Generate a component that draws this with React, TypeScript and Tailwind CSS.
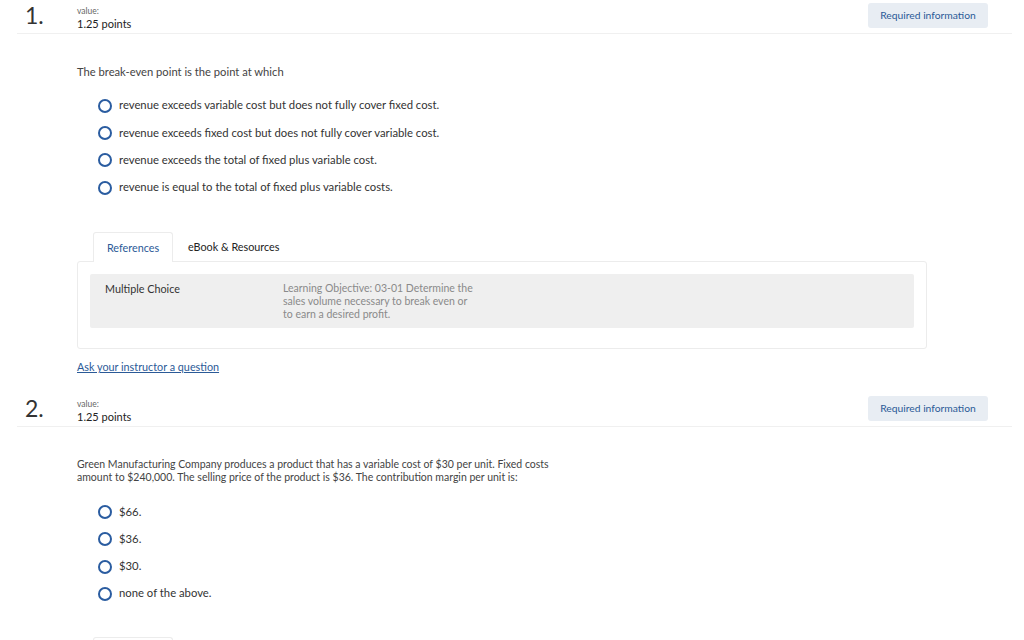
import React from 'react';

type Question = {
  num: number;
  text: string[];
  textSize: string;
  options: string[];
};

const questions: Question[] = [
  {
    num: 1,
    text: ['The break-even point is the point at which'],
    textSize: 'text-[11.2px]',
    options: [
      'revenue exceeds variable cost but does not fully cover fixed cost.',
      'revenue exceeds fixed cost but does not fully cover variable cost.',
      'revenue exceeds the total of fixed plus variable cost.',
      'revenue is equal to the total of fixed plus variable costs.',
    ],
  },
  {
    num: 2,
    text: [
      'Green Manufacturing Company produces a product that has a variable cost of $30 per unit. Fixed costs',
      'amount to $240,000. The selling price of the product is $36. The contribution margin per unit is:',
    ],
    textSize: 'text-[10.5px]',
    options: ['$66.', '$36.', '$30.', 'none of the above.'],
  },
];

const Header: React.FC<{ num: number }> = ({ num }) => (
  <div className="ml-[17px] w-[995px] h-[34px] border-b border-[#f0f0f0] flex relative">
    <div className="w-[60px] pl-[8px] pt-[1px] text-[23px] leading-[28px] text-[#333]">{num}.</div>
    <div className="pt-[6px]">
      <div className="text-[8.5px] leading-[11px] text-[#666]">value:</div>
      <div className="text-[11px] leading-[14px] text-[#222]">1.25 points</div>
    </div>
    <button className="absolute right-[24px] top-[3px] w-[120px] h-[25px] rounded-[3px] bg-[#e8edf3] text-[10.3px] text-[#2b5a97]">
      Required information
    </button>
  </div>
);

const Radio: React.FC = () => (
  <span className="w-[14px] h-[14px] rounded-full border-2 border-[#2a5ca0] inline-block shrink-0" />
);

const QuestionBlock: React.FC<{ q: Question }> = ({ q }) => (
  <div>
    <Header num={q.num} />
    <div className={`ml-[77px] mt-[31px] ${q.textSize} leading-[13px] text-[#444]`}>
      {q.text.map((line, i) => (
        <div key={i}>{line}</div>
      ))}
    </div>
    <div className="ml-[98px] mt-[14px]">
      {q.options.map((opt, i) => (
        <div key={i} className="h-[27.33px] flex items-center gap-[7px]">
          <Radio />
          <span className="text-[11.3px] text-[#333]">{opt}</span>
        </div>
      ))}
    </div>
  </div>
);

export default function App() {
  return (
    <div className="w-[1024px] h-[640px] overflow-hidden bg-white" style={{ fontFamily: 'Lato, "Noto Sans", sans-serif' }}>
      <QuestionBlock q={questions[0]} />

      <div className="ml-[77px] mt-[31px] w-[850px]">
        <div className="flex items-end h-[29px] pl-[16px]">
          <div className="h-[30px] w-[80px] border border-b-0 border-[#ececec] rounded-t-[3px] bg-white relative top-[1px] flex items-center justify-center text-[10.8px] text-[#2b5a97]">
            References
          </div>
          <div className="h-[29px] px-[15px] flex items-center text-[10.8px] text-[#222]">eBook &amp; Resources</div>
        </div>
        <div className="border border-[#ececec] rounded-[3px] h-[88px] px-[12px] pt-[12px]">
          <div className="bg-[#efefef] rounded-[2px] h-[54px] flex pt-[8px]">
            <div className="w-[193px] pl-[15px] text-[10.8px] leading-[13px] text-[#333]">Multiple Choice</div>
            <div className="w-[193px] text-[10.5px] leading-[13px] text-[#8a8a8a]">
              Learning Objective: 03-01 Determine the sales volume necessary to break even or to earn a desired profit.
            </div>
          </div>
        </div>
      </div>

      <div className="ml-[77px] mt-[11px] h-[14px] text-[10.8px] leading-[14px]">
        <a className="text-[#2b5a97] underline">Ask your instructor a question</a>
      </div>

      <div className="mt-[19px]">
        <QuestionBlock q={questions[1]} />
      </div>

      <div className="ml-[93px] mt-[29px] w-[80px] h-[10px] border-t border-x border-[#ececec] rounded-t-[3px]" />
    </div>
  );
}
